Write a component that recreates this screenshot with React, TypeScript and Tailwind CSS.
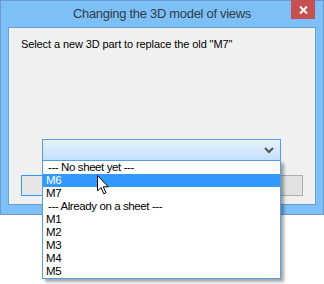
import { useState } from "react"

const groups = [
  { label: "--- No sheet yet ---", items: ["M6", "M7"] },
  { label: "--- Already on a sheet ---", items: ["M1", "M2", "M3", "M4", "M5"] },
]

function Cursor() {
  return (
    <svg width="13" height="20" viewBox="0 0 13 20" className="absolute left-[97px] top-[175px]">
      <path d="M0.5 0.5 L0.5 16 L4 12.5 L6.8 18.8 L9 17.8 L6.3 11.8 L11.3 11.8 Z" fill="#fff" stroke="#000" strokeWidth="1" strokeLinejoin="miter" />
    </svg>
  )
}

export default function App() {
  const [selected] = useState("M6")

  return (
    <div className="relative w-[324px] h-[284px] bg-white overflow-hidden" style={{ fontFamily: "'Liberation Sans', Arial, sans-serif" }}>
      {/* Window */}
      <div className="flex flex-col w-[324px] h-[215px] bg-[#7cc0f7] border border-[#6a9ccd] px-[7px] pb-[9px]">
        {/* Title bar */}
        <div className="relative flex items-center justify-center h-[26px] shrink-0">
          <span className="text-[13px] text-[#333c45] tracking-[-0.3px]">
            Changing the 3D model of views
          </span>
          <div className="absolute right-[1px] top-[-1px] w-[24px] h-[19px] bg-[#c75050] flex items-center justify-center">
            <svg width="9" height="8" viewBox="0 0 9 8">
              <path d="M1 0.5 L8 7.5 M8 0.5 L1 7.5" stroke="#fff" strokeWidth="2" />
            </svg>
          </div>
        </div>

        {/* Client area */}
        <div className="flex-1 bg-[#f0f0f0] border border-[#6e9fce] pt-[9px] pl-[12px]">
          <p className="text-[11px] leading-[15px] tracking-[-0.1px] text-black">Select a new 3D part to replace the old "M7"</p>

          <div className="mt-[87px] ml-[21px] w-[239px] h-[22px] border border-[#569de5] bg-gradient-to-b from-[#e6f2fc] to-[#c4e0fc] flex items-center justify-end pr-[6px]">
            <svg width="10" height="7" viewBox="0 0 10 7">
              <path d="M1 1 L5 5 L9 1" fill="none" stroke="#555" strokeWidth="2" />
            </svg>
          </div>

          <div className="flex mt-[14px]">
            <div className="w-[130px] h-[21px] border border-[#3399ff] bg-[#e5e5e5]" />
            <div className="ml-[10px] w-[142px] h-[21px] border border-[#adadad] bg-[#e1e1e1]" />
          </div>
        </div>
      </div>

      {/* Open dropdown list */}
      <div className="absolute left-[42px] top-[160px] w-[239px] bg-white border border-[#569de5] shadow-[3px_3px_3px_rgba(0,0,0,0.35)]">
        {groups.map((g) => (
          <div key={g.label}>
            <div className="h-[13px] leading-[13px] text-[11.5px] tracking-[-0.4px] text-black pl-[5px]">{g.label}</div>
            {g.items.map((it) => (
              <div
                key={it}
                className={
                  it === selected
                    ? "h-[13px] leading-[13px] text-[11.5px] tracking-[-0.4px] pl-[3px] bg-[#3399ff] text-white"
                    : "h-[13px] leading-[13px] text-[11.5px] tracking-[-0.4px] pl-[3px] text-black"
                }
              >
                {it}
              </div>
            ))}
          </div>
        ))}
      </div>

      <Cursor />
    </div>
  )
}
